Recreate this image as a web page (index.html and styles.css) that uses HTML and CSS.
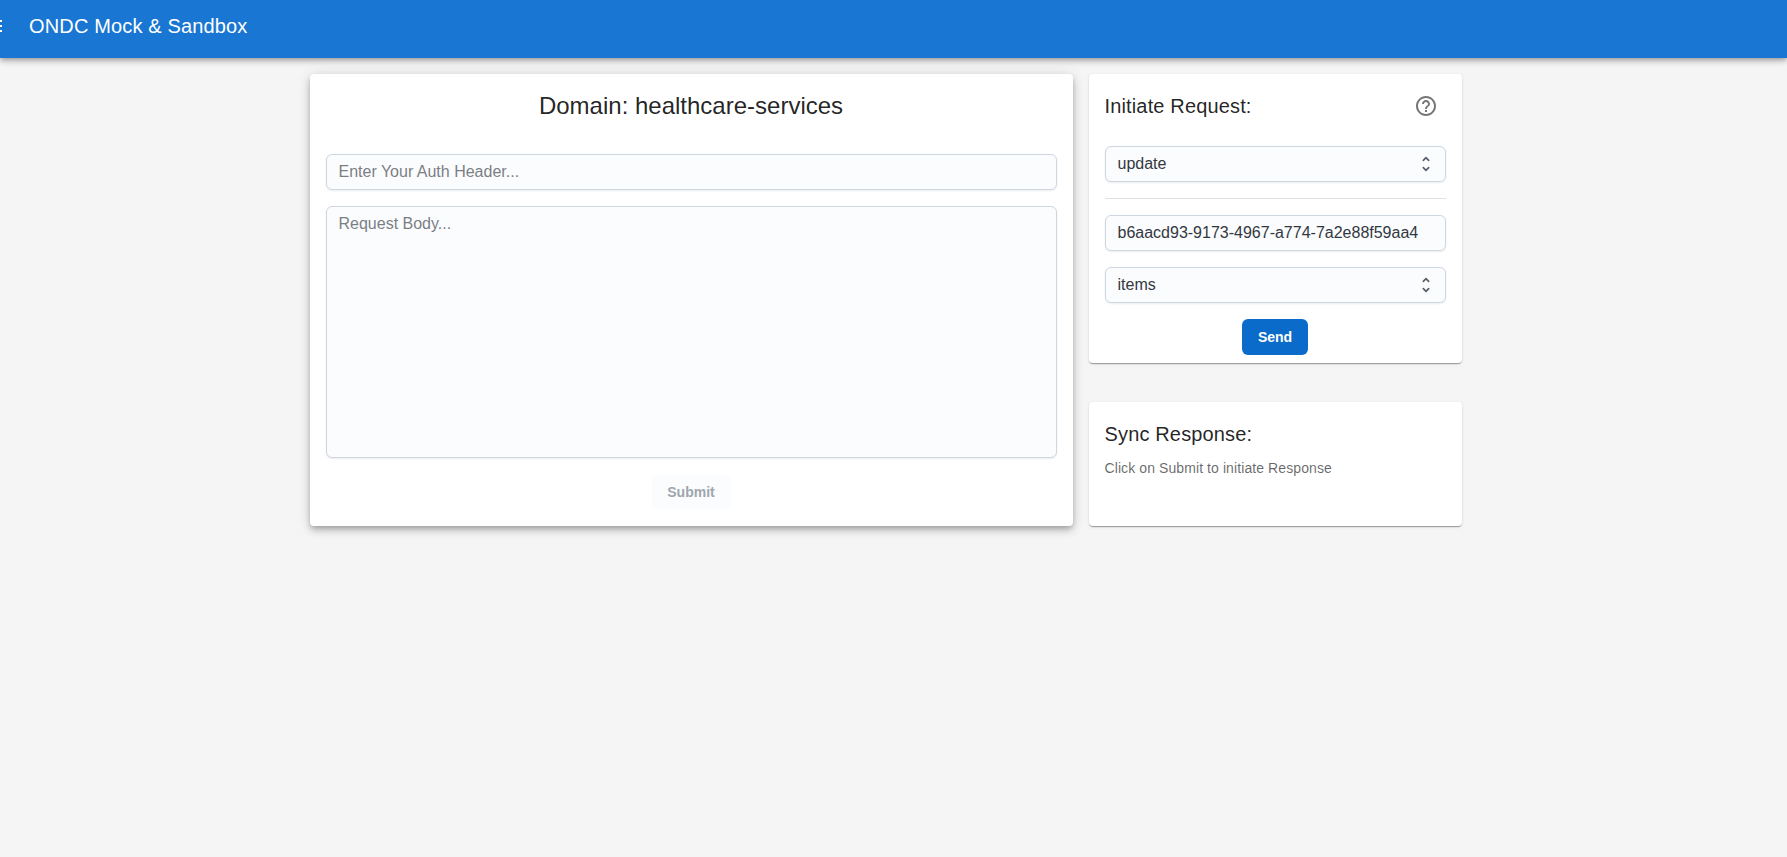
FILE: index.html
```html
<!DOCTYPE html>
<html lang="en">
<head>
<meta charset="utf-8">
<title>ONDC Mock &amp; Sandbox</title>
<link rel="stylesheet" href="styles.css">
</head>
<body>
<header class="appbar">
  <svg class="menu-icon" viewBox="0 0 24 24"><path d="M3 18h18v-2H3v2zm0-5h18v-2H3v2zm0-7v2h18V6H3z"/></svg>
  <div class="brand">ONDC Mock &amp; Sandbox</div>
</header>
<main class="layout">
  <section class="paper paper-main">
    <h1 class="domain-title">Domain: healthcare-services</h1>
    <input class="field" type="text" placeholder="Enter Your Auth Header...">
    <textarea class="field body-field" placeholder="Request Body..."></textarea>
    <button class="button button-disabled" disabled>Submit</button>
  </section>
  <div class="side">
    <section class="paper paper-request">
      <div class="request-head">
        <h2 class="title">Initiate Request:</h2>
        <svg class="help-icon" viewBox="0 0 24 24"><path d="M11 18h2v-2h-2v2zm1-16C6.48 2 2 6.48 2 12s4.48 10 10 10 10-4.48 10-10S17.52 2 12 2zm0 18c-4.41 0-8-3.59-8-8s3.59-8 8-8 8 3.59 8 8-3.59 8-8 8zm0-14c-2.21 0-4 1.79-4 4h2c0-1.1.9-2 2-2s2 .9 2 2c0 2-3 1.75-3 5h2c0-2.25 3-2.5 3-5 0-2.21-1.79-4-4-4z"/></svg>
      </div>
      <div class="field select">
        <span>update</span>
        <svg class="unfold-icon" viewBox="0 0 24 24"><path d="M8.800 7.600 12 4.400l3.200 3.200M8.800 16.400 12 19.600l3.200-3.200"/></svg>
      </div>
      <hr class="divider">
      <input class="field" type="text" value="b6aacd93-9173-4967-a774-7a2e88f59aa4">
      <div class="field select">
        <span>items</span>
        <svg class="unfold-icon" viewBox="0 0 24 24"><path d="M8.800 7.600 12 4.400l3.200 3.200M8.800 16.400 12 19.600l3.200-3.200"/></svg>
      </div>
      <button class="button button-send">Send</button>
    </section>
    <section class="paper paper-response">
      <h2 class="title">Sync Response:</h2>
      <p class="hint">Click on Submit to initiate Response</p>
    </section>
  </div>
</main>
</body>
</html>
```
FILE: styles.css
```css
* { box-sizing: border-box; }
body {
  margin: 0;
  min-height: 100vh;
  overflow: hidden;
  background: #f5f5f5;
  color: rgba(0, 0, 0, 0.87);
  font-family: "Liberation Sans", Arial, sans-serif;
}
.appbar {
  display: flex;
  align-items: flex-start;
  height: 58px;
  padding-top: 10px;
  background: #1976d2;
  color: #fff;
  box-shadow: 0 2px 4px -1px rgba(0,0,0,.2), 0 4px 5px 0 rgba(0,0,0,.14), 0 1px 10px 0 rgba(0,0,0,.12);
}
.menu-icon {
  width: 24px;
  height: 24px;
  margin: 4px 24px 0 -19px;
  fill: currentColor;
  flex: none;
}
.brand {
  font-size: 20px;
  line-height: 32px;
  letter-spacing: 0.15px;
}
.layout {
  display: grid;
  grid-template-columns: 763px 373px;
  gap: 16px;
  width: 1152px;
  margin: 16px auto 0 309.5px;
}
.paper {
  display: flex;
  flex-direction: column;
  padding: 16px;
  border-radius: 4px;
  background: #fff;
  box-shadow: 0 2px 1px -1px rgba(0,0,0,.2), 0 1px 1px 0 rgba(0,0,0,.14), 0 1px 3px 0 rgba(0,0,0,.12);
}
.paper-main {
  height: 452px;
  gap: 16px;
  box-shadow: 0 3px 5px -1px rgba(0,0,0,.2), 0 5px 8px 0 rgba(0,0,0,.14), 0 1px 14px 0 rgba(0,0,0,.12);
}
.domain-title {
  margin: 0 0 16px;
  font-size: 24px;
  font-weight: 400;
  line-height: 32px;
  text-align: center;
}
.field {
  width: 100%;
  height: 36px;
  flex: none;
  padding: 0 12px;
  border: 1px solid #cdd7e1;
  border-radius: 6px;
  background: #fbfcfe;
  box-shadow: 0 1px 2px 0 rgba(21,21,21,.08);
  color: #32383e;
  font: 16px/24px "Liberation Sans", Arial, sans-serif;
  outline: none;
}
.field::placeholder {
  color: #32383e;
  opacity: 0.64;
}
.body-field {
  height: 252px;
  padding: 5px 12px;
  resize: none;
}
.button {
  height: 36px;
  flex: none;
  align-self: center;
  padding: 0;
  border: 0;
  border-radius: 6px;
  font: bold 14px/21px "Liberation Sans", Arial, sans-serif;
}
.button-disabled {
  width: 79px;
  background: #fbfcfe;
  color: #9fa6ad;
}
.button-send {
  width: 66px;
  background: #0b6bcb;
  color: #fff;
}
.side {
  display: flex;
  flex-direction: column;
  justify-content: space-between;
}
.paper-request {
  height: 289px;
  gap: 16px;
  padding-bottom: 8px;
}
.request-head {
  display: flex;
  align-items: center;
  justify-content: space-between;
  height: 32px;
  margin-bottom: 8px;
  padding-right: 8px;
}
.title {
  margin: 0;
  font-size: 20px;
  font-weight: 400;
  line-height: 32px;
  letter-spacing: 0.15px;
}
.help-icon {
  width: 24px;
  height: 24px;
  fill: rgba(0, 0, 0, 0.54);
}
.select {
  display: flex;
  align-items: center;
  justify-content: space-between;
  padding-right: 9px;
}
.unfold-icon {
  width: 20px;
  height: 20px;
  fill: none;
  stroke: #555e68;
  stroke-width: 2;
  stroke-linecap: round;
  stroke-linejoin: round;
}
.divider {
  width: 100%;
  height: 1px;
  margin: 0;
  border: 0;
  flex: none;
  background: rgba(0, 0, 0, 0.12);
}
.paper-response { height: 124px; }
.hint {
  margin: 8px 0 0;
  color: rgba(0, 0, 0, 0.6);
  font-size: 14px;
  line-height: 20px;
  letter-spacing: 0.09px;
}
```
